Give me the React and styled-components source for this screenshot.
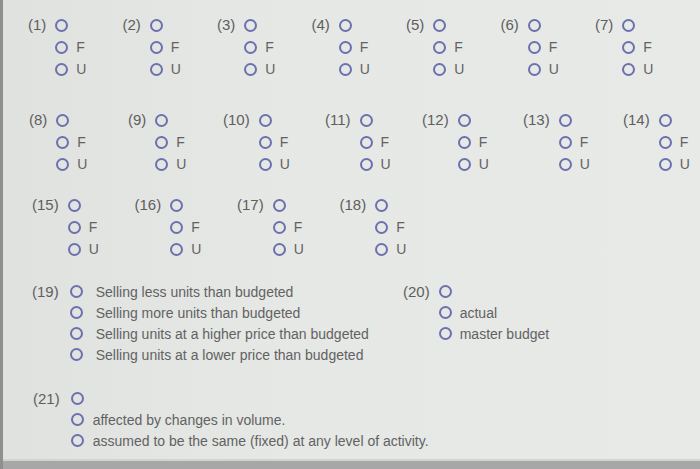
import styled, { createGlobalStyle } from 'styled-components'

const GlobalStyle = createGlobalStyle`
  html, body {
    margin: 0;
    padding: 0;
    background: #e4e6e4;
  }
  body {
    font-family: 'Liberation Sans', Arial, sans-serif;
  }
`

const Page = styled.div`
  display: flex;
  flex-direction: column;
  min-height: 100vh;
  box-sizing: border-box;
  border-left: 3px solid #8e8f8e;
  background: linear-gradient(90deg, #e0e2e0 0%, #e6e8e6 40%, #e8eae8 100%);
`
const Sheet = styled.section`
  flex: 1;
  padding: 13px 0 0 25px;
`
const Row = styled.div`
  display: grid;
  grid-template-columns: ${({ $cols }) => $cols};
  margin-top: ${({ $top }) => $top}px;
  margin-left: ${({ $shift }) => $shift || 0}px;
`
const Item = styled.div`
  display: flex;
  align-items: flex-start;
  gap: ${({ $gap }) => $gap || 9}px;
`
const Label = styled.span`
  font-size: 15px;
  line-height: ${({ $lh }) => $lh || 22}px;
  color: #5e5e5e;
  white-space: nowrap;
`
const Options = styled.div`
  display: flex;
  flex-direction: column;
`
const Option = styled.div`
  display: flex;
  align-items: center;
  gap: ${({ $gap }) => $gap || 8}px;
  height: ${({ $lh }) => $lh || 22}px;
  font-size: 14px;
  color: #626262;
  white-space: nowrap;
`
const Radio = styled.span`
  display: inline-block;
  flex: none;
  width: 13px;
  height: 13px;
  box-sizing: border-box;
  border: 2px solid #6c70ad;
  border-radius: 50%;
`
const Footer = styled.div`
  height: 8px;
  border-top: 2px solid #d2d3d2;
  background: #a6a7a6;
`

function TFItem({ n }) {
  return (
    <Item>
      <Label>({n})</Label>
      <Options>
        <Option><Radio /></Option>
        <Option><Radio />F</Option>
        <Option><Radio />U</Option>
      </Options>
    </Item>
  )
}

function ChoiceItem({ n, choices, gap = 11, textGap = 9 }) {
  return (
    <Item $gap={gap}>
      <Label $lh={21}>({n})</Label>
      <Options>
        {choices.map((c, i) => (
          <Option key={i} $lh={21} $gap={textGap}>
            <Radio />
            {c}
          </Option>
        ))}
      </Options>
    </Item>
  )
}

const rowOne = [1, 2, 3, 4, 5, 6, 7]
const rowTwo = [8, 9, 10, 11, 12, 13, 14]
const rowThree = [15, 16, 17, 18]

export default function App() {
  return (
    <>
      <GlobalStyle />
      <Page>
        <Sheet>
          <Row $cols="repeat(7, 94.5px)" $top={1}>
            {rowOne.map((n) => <TFItem key={n} n={n} />)}
          </Row>
          <Row $cols="99px 95px 102px 97px 101px 100px 100px" $top={29} $shift={1}>
            {rowTwo.map((n) => <TFItem key={n} n={n} />)}
          </Row>
          <Row $cols="repeat(4, 102.5px)" $top={19} $shift={4}>
            {rowThree.map((n) => <TFItem key={n} n={n} />)}
          </Row>
          <Row $cols="371px auto" $top={21} $shift={4}>
            <ChoiceItem
              n={19}
              textGap={13}
              choices={[
                'Selling less units than budgeted',
                'Selling more units than budgeted',
                'Selling units at a higher price than budgeted',
                'Selling units at a lower price than budgeted',
              ]}
            />
            <ChoiceItem n={20} gap={9} textGap={8} choices={['', 'actual', 'master budget']} />
          </Row>
          <Row $cols="auto" $top={23} $shift={5}>
            <ChoiceItem
              n={21}
              choices={[
                '',
                'affected by changes in volume.',
                'assumed to be the same (fixed) at any level of activity.',
              ]}
            />
          </Row>
        </Sheet>
        <Footer />
      </Page>
    </>
  )
}
